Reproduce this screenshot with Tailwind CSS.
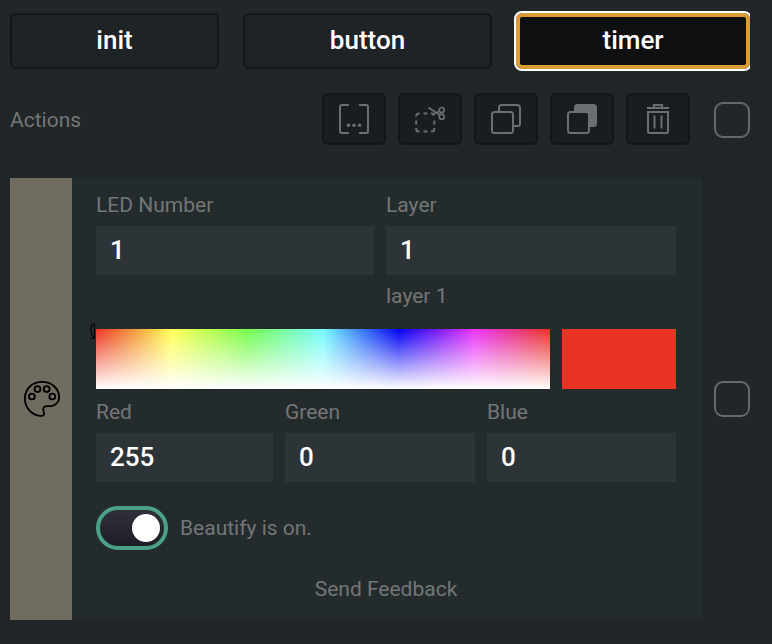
<!DOCTYPE html>
<html lang="en">
<head>
<meta charset="utf-8">
<title>Actions</title>
<script src="https://cdn.jsdelivr.net/npm/@tailwindcss/browser@4"></script>
</head>
<body class="w-[772px] h-[644px] overflow-hidden bg-[#212629] font-[Roboto,sans-serif] text-[21px] leading-6 text-[#747676]">
<div class="w-[750px] h-[644px] pl-[10px] overflow-hidden">
  <nav class="pt-[13px] flex gap-6 text-[26px] font-medium text-white">
    <button class="w-[209px] h-14 pb-0.5 rounded-md border-2 border-[#121617] bg-[#1e2326]">init</button>
    <button class="w-[249px] h-14 pb-0.5 rounded-md border-2 border-[#121617] bg-[#1e2326]">button</button>
    <button class="w-[234px] h-14 pb-0.5 rounded-md border-4 border-[#db9b35] outline-2 outline-white bg-[#0e1012]">timer</button>
  </nav>
  <div class="mt-6 h-[52px] flex items-center gap-3">
    <span class="mr-auto pt-0.5">Actions</span>
    <button class="w-16 h-[52px] rounded-md border-2 border-[#121617] bg-[#191d20] flex items-center justify-center text-[#6b6f71]">
      <svg width="30" height="30" fill="none" stroke="currentColor" stroke-width="2"><path d="M10 1H3a2 2 0 0 0-2 2v24a2 2 0 0 0 2 2h7M20 1h7a2 2 0 0 1 2 2v24a2 2 0 0 1-2 2h-7"/><g fill="currentColor" stroke="none"><circle cx="9.5" cy="21.3" r="1.8"/><circle cx="15" cy="21.3" r="1.8"/><circle cx="20.600" cy="21.300" r="1.800"/></g></svg>
    </button>
    <button class="w-16 h-[52px] rounded-md border-2 border-[#121617] bg-[#191d20] flex items-center justify-center text-[#6b6f71]">
      <svg width="32" height="30" fill="none" stroke="currentColor" stroke-width="2"><path d="M2.200 12.500V12a2.500 2.500 0 0 1 2.500-2.500h.8M9.500 9.500h4M2.200 16.500v4M2.200 24v1a2.500 2.500 0 0 0 2.500 2.500h.8M9.500 27.500h4M17 27.500h.8a2.500 2.500 0 0 0 2.500-2.500v-1M20.300 16.500v4M17 9.500h1.500l1.800 2"/><circle cx="27.700" cy="6" r="2.500" stroke-width="1.700"/><circle cx="27.700" cy="12.700" r="2.500" stroke-width="1.700"/><path d="M14.500 3.500l11 7.200M18 10.500l7.500-3" stroke-width="1.800"/></svg>
    </button>
    <button class="w-16 h-[52px] rounded-md border-2 border-[#121617] bg-[#191d20] flex items-center justify-center text-[#6b6f71]">
      <svg width="30" height="30" fill="none" stroke="currentColor" stroke-width="2"><rect x="1" y="8" width="21" height="21" rx="2.500"/><path d="M8 8V3.500A2.500 2.500 0 0 1 10.500 1h16A2.500 2.500 0 0 1 29 3.500v16a2.500 2.500 0 0 1-2.500 2.500H22"/></svg>
    </button>
    <button class="w-16 h-[52px] rounded-md border-2 border-[#121617] bg-[#191d20] flex items-center justify-center text-[#6b6f71]">
      <svg width="30" height="30" stroke="currentColor" stroke-width="2"><rect x="8" y="1" width="21" height="21" rx="2.500" fill="currentColor"/><rect x="1" y="8" width="21" height="21" rx="2.500" class="fill-[#191d20]"/></svg>
    </button>
    <button class="w-16 h-[52px] rounded-md border-2 border-[#121617] bg-[#191d20] flex items-center justify-center text-[#6b6f71]">
      <svg width="22" height="30" fill="none" stroke="currentColor" stroke-width="2"><path d="M0 4h22M7 4V1h8v3M1 8h20v19.500a1.500 1.500 0 0 1-1.500 1.500h-17A1.500 1.500 0 0 1 1 27.500zM7.500 11.500v13M14.500 11.500v13"/></svg>
    </button>
    <span class="ml-3 mt-0.5 w-9 h-9 rounded-[9px] border-2 border-[#656969]"></span>
  </div>
  <div class="mt-[33px] flex items-center gap-3">
    <section class="w-[692px] h-[442px] flex bg-[#242b2d]">
      <div class="w-[62px] bg-[#706c60] flex items-center justify-center">
        <svg class="ml-0.5" width="36" height="36" viewBox="0.400 0.400 37 37" fill="none" stroke="black" stroke-width="1.900"><path d="M19 1.300C8.500 1.300 1.300 9 1.300 18.500c0 10 8 17.700 17 17.700 2.500 0 3.300-1.700 2.500-3.700-1-2.800-1-5.900 2.500-6.200 2.200-.2 4.500.2 7-.7 4-1.500 6.200-4.500 6.200-8.600C36.500 8 28.500 1.300 19 1.300z"/><circle cx="8.500" cy="16.300" r="3"/><circle cx="14.300" cy="8.700" r="3"/><circle cx="23.700" cy="8.700" r="3"/><circle cx="29.500" cy="16.300" r="3"/></svg>
      </div>
      <div class="w-[604px] pl-6 pt-[15px]">
        <div class="grid grid-cols-[278px_290px] gap-x-3">
          <label class="h-[33px]">LED Number</label><label class="h-[33px]">Layer</label>
          <div class="h-[49px] px-[14px] bg-[#2d3437] text-white text-[26px] font-medium leading-[49px]">1</div>
          <div class="h-[49px] px-[14px] bg-[#2d3437] text-white text-[26px] font-medium leading-[49px]">1</div>
          <span class="col-start-2 mt-[9px] h-[45px]">layer 1</span>
        </div>
        <div class="flex gap-3 relative">
          <svg class="absolute -left-[6px] -top-[6px]" width="5" height="16" fill="none" stroke="#050708" stroke-width="1.200"><path d="M4 .6C1.500 2 .7 5 .7 7.500s1 5 3.300 7.500M0 15.400h5M4.500 0v16"/></svg>
          <div class="w-[454px] h-[60px] bg-[linear-gradient(to_top,white,transparent),linear-gradient(to_right,#ea3323,#ffff54_16.67%,#75fb4c_33.33%,#75fbfd_50%,#0000f5_66.67%,#ea33f7_83.33%,#ea3323)]"></div>
          <div class="w-[114px] h-[60px] bg-[#ea3323]"></div>
        </div>
        <div class="mt-[11px] grid grid-cols-[177px_190px_189px] gap-x-3">
          <label class="h-[33px]">Red</label><label class="h-[33px]">Green</label><label class="h-[33px]">Blue</label>
          <div class="h-[49px] px-[14px] bg-[#2d3437] text-white text-[26px] font-medium leading-[49px]">255</div>
          <div class="h-[49px] px-[14px] bg-[#2d3437] text-white text-[26px] font-medium leading-[49px]">0</div>
          <div class="h-[49px] px-[14px] bg-[#2d3437] text-white text-[26px] font-medium leading-[49px]">0</div>
        </div>
        <div class="mt-6 flex items-center gap-3">
          <span class="w-[72px] h-11 rounded-full border-4 border-[#4ba187] bg-linear-to-b from-[#30303a] to-[#1e1e26] flex items-center justify-end pr-1"><span class="w-7 h-7 rounded-full bg-white"></span></span>
          <span>Beautify is on.</span>
        </div>
        <div class="mt-[27px] w-[580px] text-center">Send Feedback</div>
      </div>
    </section>
    <span class="w-9 h-9 rounded-[9px] border-2 border-[#656969]"></span>
  </div>
</div>
</body>
</html>
